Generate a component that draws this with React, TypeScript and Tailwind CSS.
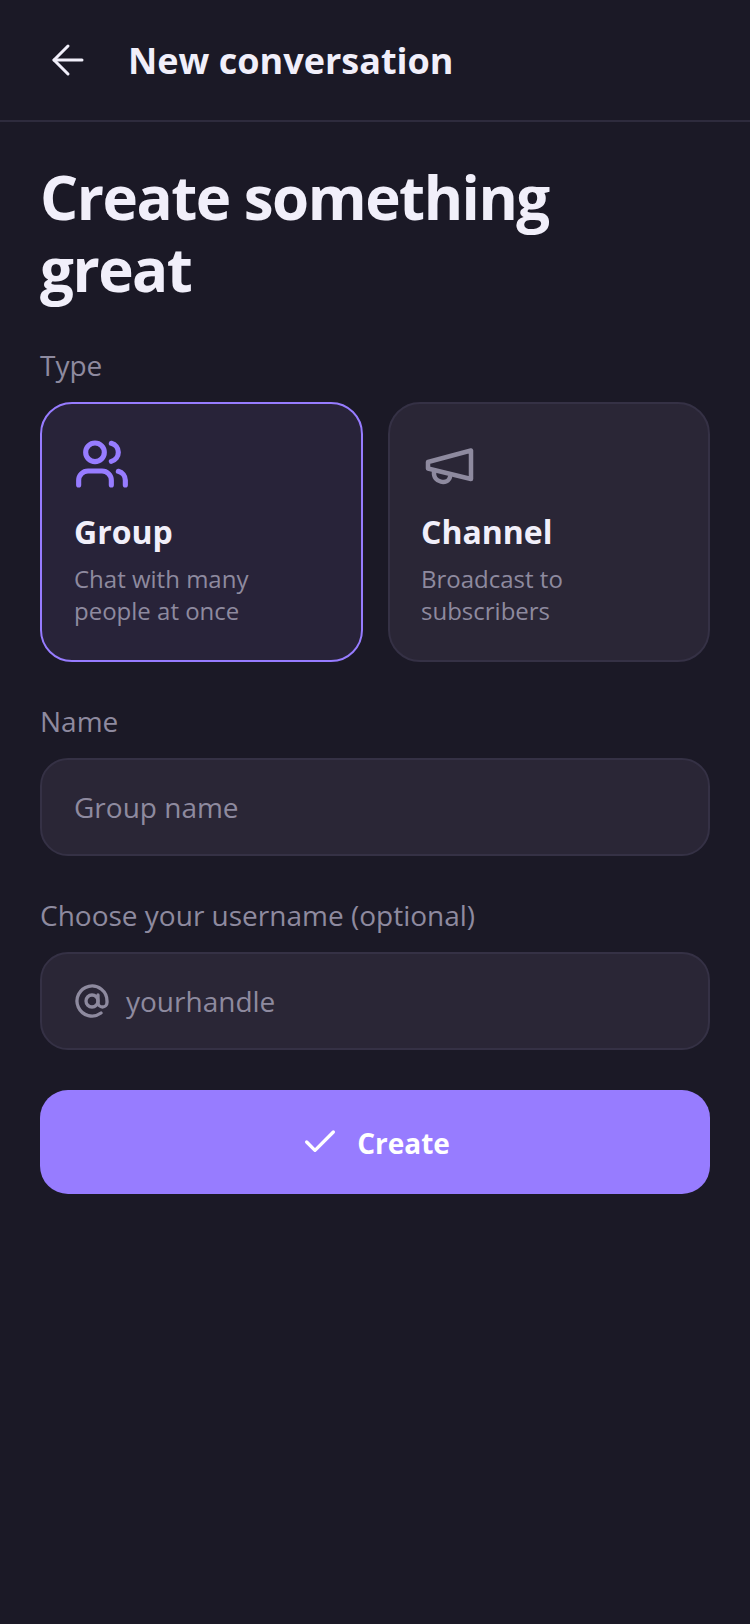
import { ArrowLeft, AtSign, Check, Users } from "lucide-react";

function Megaphone() {
  return (
    <svg width="56" height="56" viewBox="0 0 56 56" fill="none" stroke="#8e8a9f" strokeWidth="4.5" strokeLinejoin="round" strokeLinecap="round">
      <path d="M7 26 L50 14.5 V43 L7 32.5 Z" />
      <path d="M13 36 C12 47 27 49 29 41" />
    </svg>
  );
}

export default function App() {
  return (
    <div className="min-h-[1624px] bg-[#1b1926] font-['Open_Sans',sans-serif] text-[#f1effa]">
      <header className="flex h-[122px] items-center gap-[36px] border-b-2 border-[#2e2b3d] pl-[44px]">
        <ArrowLeft size={48} strokeWidth={1.5} className="text-[#f1effa]" />
        <h1 className="mt-[2px] text-[36px] font-bold leading-[48px]">New conversation</h1>
      </header>
      <main className="flex flex-col px-[40px] pt-[39px]">
        <h2 className="text-[60px] font-bold leading-[72px] tracking-[-1.5px]">Create something great</h2>
        <div className="mt-[40px] text-[28px] leading-[40px] text-[#8e8a9f]">Type</div>
        <div className="mt-[17px] grid grid-cols-[323px_322px] gap-[25px]">
          <div className="h-[260px] rounded-[32px] border-2 border-[#977cff] bg-[#282339] px-[32px] pt-[32px]">
            <Users size={56} strokeWidth={2.2} className="text-[#977cff]" />
            <div className="mt-[18px] text-[32px] font-bold leading-[44px]">Group</div>
            <div className="mt-[9px] text-[24px] leading-[32px] text-[#8e8a9f]">Chat with many people at once</div>
          </div>
          <div className="h-[260px] rounded-[32px] border-2 border-[#353145] bg-[#2a2636] pl-[31px] pr-[32px] pt-[32px]">
            <Megaphone />
            <div className="mt-[18px] text-[32px] font-bold leading-[44px]">Channel</div>
            <div className="mt-[9px] text-[24px] leading-[32px] text-[#8e8a9f]">Broadcast to subscribers</div>
          </div>
        </div>
        <label className="mt-[39px] text-[28px] leading-[40px] text-[#8e8a9f]">Name</label>
        <div className="mt-[17px] flex h-[98px] items-center rounded-[28px] border-2 border-[#353145] bg-[#2a2636] px-[32px]">
          <span className="text-[28px] text-[#8e8a9f]">Group name</span>
        </div>
        <label className="mt-[39px] text-[28px] leading-[40px] text-[#8e8a9f]">Choose your username (optional)</label>
        <div className="mt-[17px] flex h-[98px] items-center gap-[16px] rounded-[28px] border-2 border-[#353145] bg-[#2a2636] px-[32px]">
          <AtSign size={36} strokeWidth={2.2} className="text-[#8e8a9f]" />
          <span className="text-[28px] text-[#8e8a9f]">yourhandle</span>
        </div>
        <button className="mt-[40px] flex h-[104px] items-center justify-center gap-[17px] rounded-[28px] bg-[#977cff] text-white">
          <Check size={40} strokeWidth={2} />
          <span className="mt-[2px] text-[28px] font-bold">Create</span>
        </button>
      </main>
    </div>
  );
}
